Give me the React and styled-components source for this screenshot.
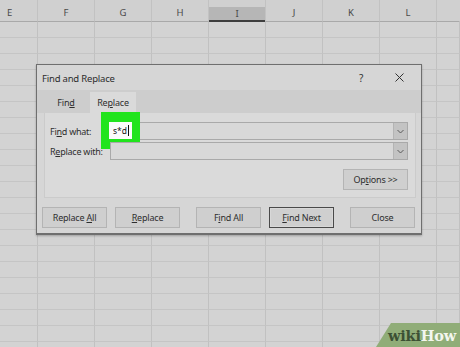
import React from "react";
import styled, { createGlobalStyle } from "styled-components";

const Global = createGlobalStyle`
  html, body { margin: 0; padding: 0; background: #d2d2d2; }
  #root { width: 460px; height: 347px; }
  * { box-sizing: border-box; }
`;

const Screen = styled.div`
  position: relative;
  width: 460px;
  height: 347px;
  overflow: hidden;
  background: #d3d3d3;
  font-family: "Noto Sans", "Liberation Sans", sans-serif;
`;

const Sheet = styled.div`
  display: grid;
  grid-template-columns: 38px repeat(7, 57px) 1fr;
  grid-auto-rows: 16px;
  grid-template-rows: 22px;
`;

const HeaderCell = styled.div`
  display: flex;
  align-items: flex-end;
  background: #d0d0d0;
  border-bottom: 1px solid #a9a9a9;
  border-right: 1px solid ${(p) => (p.$last ? "transparent" : "#c2c2c2")};
`;

const HeaderLabel = styled.div`
  flex: 1;
  height: 15px;
  display: flex;
  align-items: center;
  justify-content: ${(p) => (p.$left ? "flex-start" : "center")};
  padding-left: ${(p) => (p.$left ? "7px" : "0")};
  font-size: 9.5px;
  color: #4a4a4a;
  background: ${(p) => (p.$active ? "#b6b6b6" : "transparent")};
  border-bottom: 2px solid ${(p) => (p.$active ? "#3e3e3e" : "transparent")};
  margin-bottom: ${(p) => (p.$active ? "-1px" : "0")};
`;

const Cell = styled.div`
  background: #d3d3d3;
  border-right: 1px solid #c1c1c1;
  border-bottom: 1px solid #c5c5c5;
`;

const Dialog = styled.div`
  position: absolute;
  left: 36px;
  top: 64px;
  width: 386px;
  height: 171px;
  background: #d6d6d6;
  border: 1px solid #6f6f6f;
  border-bottom-width: 2px;
  box-shadow: 0 1px 2px rgba(0, 0, 0, 0.25);
  display: flex;
  flex-direction: column;
  color: #2c2c2c;
`;

const TitleBar = styled.div`
  height: 25px;
  display: flex;
  align-items: center;
  padding-left: 5px;
  padding-right: 14px;
  font-size: 9.5px;
  letter-spacing: -0.2px;
`;

const Title = styled.div`
  flex: 1;
  padding-top: 1px;
`;

const TitleIcon = styled.div`
  width: 16px;
  display: flex;
  justify-content: center;
  align-items: center;
  font-size: 10px;
  color: #333;
  margin-left: ${(p) => p.$gap || 0}px;
`;

const Body = styled.div`
  padding: 0 5px 0 7px;
  display: flex;
  flex-direction: column;
`;

const TabStrip = styled.div`
  height: 23px;
  display: flex;
  align-items: flex-end;
  gap: 2px;
  background: #cdcdcd;
  margin: 0 -5px 0 -7px;
  padding-left: 7px;
`;

const Tab = styled.div`
  height: 21px;
  display: flex;
  align-items: center;
  justify-content: center;
  width: ${(p) => p.$w}px;
  font-size: 9px;
  letter-spacing: -0.2px;
  background: ${(p) => (p.$active ? "#dadada" : "transparent")};
  color: #2e2e2e;
`;

const Panel = styled.div`
  height: 85px;
  background: #dadada;
  border: 1px solid #cbcbcb;
  border-top: none;
  padding: 9px 7px 0 5px;
  display: flex;
  flex-direction: column;
`;

const FormGrid = styled.div`
  display: grid;
  grid-template-columns: 60px 1fr;
  grid-auto-rows: 18px;
  row-gap: 2px;
  align-items: center;
`;

const Label = styled.div`
  font-size: 9px;
  letter-spacing: -0.25px;
  color: #2e2e2e;
`;

const Field = styled.div`
  position: relative;
  height: 18px;
  display: flex;
  background: #d8d8d8;
  border: 1px solid #a9a9a9;
`;

const FieldText = styled.div`
  flex: 1;
`;

const DropButton = styled.div`
  width: 14px;
  background: #c3c3c3;
  border-left: 1px solid #b4b4b4;
  display: flex;
  align-items: center;
  justify-content: center;
`;

const Highlight = styled.div`
  position: absolute;
  left: -10px;
  top: -11px;
  width: 39px;
  height: 37px;
  background: #21e41d;
  padding: 10px 0 0 8px;
`;

const Entry = styled.div`
  width: 23px;
  height: 17px;
  background: #fbfbfb;
  display: flex;
  align-items: center;
  padding-left: 4px;
  font-size: 8.5px;
  color: #111;
`;

const Caret = styled.span`
  display: inline-block;
  width: 1px;
  height: 11px;
  background: #111;
  margin-left: 1px;
`;

const OptionsRow = styled.div`
  display: flex;
  justify-content: flex-end;
  margin-top: 9px;
`;

const Button = styled.div`
  width: 65px;
  height: 21px;
  display: flex;
  align-items: center;
  justify-content: center;
  font-size: 9px;
  letter-spacing: -0.2px;
  color: #2e2e2e;
  background: #cfcfcf;
  border: 1px solid ${(p) => (p.$default ? "#4a4a4a" : "#b4b4b4")};
  box-shadow: ${(p) => (p.$default ? "inset 0 0 0 1px #d8d8d8" : "none")};
`;

const ButtonRow = styled.div`
  display: flex;
  margin: 9px 0 0 -2px;
`;

const Spacer = styled.div`
  width: ${(p) => p.$w}px;
`;

const U = styled.span`
  text-decoration: underline;
  text-underline-offset: 1px;
`;

const Badge = styled.div`
  position: absolute;
  right: 0;
  bottom: 0;
  width: 84px;
  height: 24px;
  background: #90ad78;
  clip-path: polygon(15px 0, 100% 0, 100% 100%, 0 100%);
  display: flex;
  align-items: center;
  justify-content: flex-end;
  padding-right: 4px;
  font-family: "DejaVu Serif", "Liberation Serif", serif;
  font-weight: bold;
  font-size: 14.5px;
  letter-spacing: -0.2px;
`;

const Wiki = styled.span`
  color: #3c5034;
`;
const How = styled.span`
  color: #f3f6ee;
`;

const Chevron = () => (
  <svg width="7" height="5" viewBox="0 0 7 5">
    <path d="M0.5 1 L3.5 4 L6.5 1" fill="none" stroke="#5a5a5a" strokeWidth="1" />
  </svg>
);

const letters = ["E", "F", "G", "H", "I", "J", "K", "L", ""];

export default function App() {
  const rows = Array.from({ length: 21 });
  return (
    <>
      <Global />
      <Screen>
        <Sheet>
          {letters.map((l, i) => (
            <HeaderCell key={"h" + i} $last={i === letters.length - 1}>
              <HeaderLabel $left={i === 0} $active={l === "I"}>
                {l}
              </HeaderLabel>
            </HeaderCell>
          ))}
          {rows.map((_, r) =>
            letters.map((_, c) => <Cell key={r + "-" + c} />)
          )}
        </Sheet>

        <Dialog>
          <TitleBar>
            <Title>Find and Replace</Title>
            <TitleIcon>?</TitleIcon>
            <TitleIcon $gap={22}>
              <svg width="9" height="9" viewBox="0 0 9 9">
                <path d="M0.5 0.5 L8.5 8.5 M8.5 0.5 L0.5 8.5" stroke="#333" strokeWidth="1" />
              </svg>
            </TitleIcon>
          </TitleBar>
          <Body>
            <TabStrip>
              <Tab $w={44}>
                <span>Fin<U>d</U></span>
              </Tab>
              <Tab $w={46} $active>
                <span>Re<U>p</U>lace</span>
              </Tab>
            </TabStrip>
            <Panel>
              <FormGrid>
                <Label>
                  Fi<U>n</U>d what:
                </Label>
                <Field>
                  <FieldText />
                  <DropButton>
                    <Chevron />
                  </DropButton>
                  <Highlight>
                    <Entry>
                      s*d
                      <Caret />
                    </Entry>
                  </Highlight>
                </Field>
                <Label>
                  R<U>e</U>place with:
                </Label>
                <Field>
                  <FieldText />
                  <DropButton>
                    <Chevron />
                  </DropButton>
                </Field>
              </FormGrid>
              <OptionsRow>
                <Button>
                  <span>Op<U>t</U>ions &gt;&gt;</span>
                </Button>
              </OptionsRow>
            </Panel>
            <ButtonRow>
              <Button>
                <span>Replace <U>A</U>ll</span>
              </Button>
              <Spacer $w={8} />
              <Button>
                <span><U>R</U>eplace</span>
              </Button>
              <Spacer $w={16} />
              <Button>
                <span>F<U>i</U>nd All</span>
              </Button>
              <Spacer $w={8} />
              <Button $default>
                <span><U>F</U>ind Next</span>
              </Button>
              <Spacer $w={16} />
              <Button>
                <span>Close</span>
              </Button>
            </ButtonRow>
          </Body>
        </Dialog>

        <Badge>
          <Wiki>wiki</Wiki>
          <How>How</How>
        </Badge>
      </Screen>
    </>
  );
}
